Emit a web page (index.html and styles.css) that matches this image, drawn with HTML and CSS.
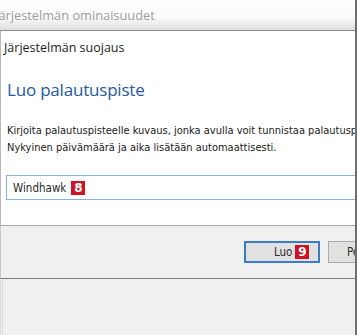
FILE: index.html
```html
<!DOCTYPE html>
<html lang="fi">
<head>
  <meta charset="UTF-8">
  <meta name="viewport" content="width=device-width, initial-scale=1.0">
  <title>Järjestelmän ominaisuudet</title>
  <link rel="stylesheet" href="styles.css">
</head>
<body>
  <div class="window">
    <div class="titlebar">
      <span class="title">Järjestelmän ominaisuudet</span>
    </div>

    <div class="content">
      <div class="tab-title">Järjestelmän suojaus</div>
      <h1 class="heading">Luo palautuspiste</h1>
      <p class="desc">
        Kirjoita palautuspisteelle kuvaus, jonka avulla voit tunnistaa palautuspisteen.<br>
        Nykyinen päivämäärä ja aika lisätään automaattisesti.
      </p>
      <div class="input-box">
        <span class="input-text">Windhawk</span>
        <span class="badge">8</span>
      </div>
    </div>

    <div class="footer">
      <button class="btn btn-primary">Luo <span class="badge">9</span></button>
      <button class="btn">Peruuta</button>
    </div>

    <div class="bottom"></div>
  </div>
</body>
</html>
```

FILE: styles.css
```css
body {
  margin: 0;
  padding: 0;
  width: 357px;
  height: 335px;
  overflow: hidden;
  background: #f0f0f0;
}

.window {
  width: 355px;
  height: 335px;
  border-right: 2px solid #6e6e6e;
  display: flex;
  flex-direction: column;
  overflow: hidden;
}

.titlebar {
  height: 30px;
  flex-shrink: 0;
  background: linear-gradient(to bottom, #ffffff 0%, #fbfbfb 55%, #e9e9e9 85%, #dcdcdc 100%);
  border-bottom: 1px solid #8c8c8c;
  display: flex;
  align-items: center;
  overflow: hidden;
}

.title {
  margin-left: -5px;
  font-family: "Open Sans", sans-serif;
  font-size: 12.8px;
  color: #9d9d9d;
  white-space: nowrap;
}

.content {
  height: 194px;
  flex-shrink: 0;
  background: #ffffff;
  border-left: 1px solid #b9b9b9;
  border-bottom: 1px solid #a8a8a8;
  padding: 0 0 0 3px;
  overflow: hidden;
}

.tab-title {
  margin-top: 8px;
  font-family: "Open Sans", sans-serif;
  font-size: 12.5px;
  color: #1e1e1e;
  white-space: nowrap;
}

.heading {
  margin: 22px 0 0 3px;
  font-family: "Open Sans", sans-serif;
  font-size: 17px;
  font-weight: 400;
  letter-spacing: -0.2px;
  color: #2459a6;
  white-space: nowrap;
}

.desc {
  margin: 21px 0 0 3px;
  font-family: "DejaVu Sans Condensed", "DejaVu Sans", sans-serif;
  font-size: 11px;
  line-height: 17px;
  color: #1a1a1a;
  white-space: nowrap;
}

.input-box {
  margin: 19px 0 0 2px;
  width: 400px;
  height: 23px;
  border: 1px solid #84b2df;
  display: flex;
  align-items: center;
  gap: 5px;
  padding-left: 6px;
}

.input-text {
  font-family: "DejaVu Sans Condensed", "DejaVu Sans", sans-serif;
  font-size: 11.5px;
  color: #2a2a2a;
}

.badge {
  display: inline-flex;
  align-items: center;
  justify-content: center;
  width: 14px;
  height: 14px;
  background: #cc1424;
  color: #ffffff;
  font-family: "DejaVu Sans", sans-serif;
  font-weight: 700;
  font-size: 12px;
  line-height: 1;
}

.footer {
  height: 52px;
  flex-shrink: 0;
  border-left: 1px solid #c8c8c8;
  border-bottom: 1px solid #7d7d7d;
  display: flex;
  align-items: center;
  gap: 8px;
  padding-left: 243px;
  overflow: hidden;
}

.btn {
  flex-shrink: 0;
  width: 76px;
  height: 22px;
  background: #e1e1e1;
  border: 1px solid #adadad;
  font-family: "DejaVu Sans Condensed", "DejaVu Sans", sans-serif;
  font-size: 11.5px;
  color: #2a2a2a;
  display: flex;
  align-items: center;
  justify-content: flex-start;
  gap: 3px;
  padding: 0 0 0 18px;
  margin: 0;
}

.btn-primary {
  border: 2px solid #3a7cc4;
  padding-left: 28px;
}

.bottom {
  flex: 1;
  border-left: 3px double #dcdcdc;
}
```
